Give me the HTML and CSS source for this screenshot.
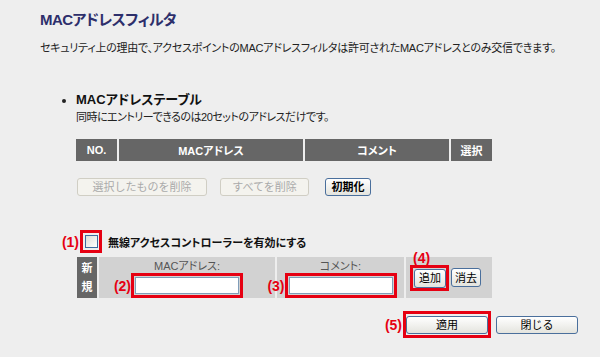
FILE: index.html
```html
<!DOCTYPE html>
<html lang="ja">
<head>
<meta charset="UTF-8">
<title>MACアドレスフィルタ</title>
<link rel="stylesheet" href="styles.css">
</head>
<body>
<div class="page">
	<h1 class="title">MACアドレスフィルタ</h1>
	<p class="lead">セキュリティ上の理由で、アクセスポイントのMACアドレスフィルタは許可されたMACアドレスとのみ交信できます。</p>

	<ul class="section">
		<li>
			<div class="sect-title">MACアドレステーブル</div>
			<div class="sect-note">同時にエントリーできるのは20セットのアドレスだけです。</div>
		</li>
	</ul>

	<table class="mac-table">
		<tr>
			<th class="col-no">NO.</th>
			<th class="col-mac">MACアドレス</th>
			<th class="col-comment">コメント</th>
			<th class="col-sel">選択</th>
		</tr>
	</table>

	<div class="table-actions">
		<button class="btn btn-delsel" disabled>選択したものを削除</button>
		<button class="btn btn-delall" disabled>すべてを削除</button>
		<button class="btn btn-init">初期化</button>
	</div>

	<div class="enable-row">
		<span class="mark mark-check"><span class="num">(1)</span><input type="checkbox" class="chk"></span>
		<label class="enable-label">無線アクセスコントローラーを有効にする</label>
	</div>

	<table class="entry-table">
		<tr>
			<td class="cell-new">新<br>規</td>
			<td class="cell-field cell-mac">
				<div class="field-inner">
					<div class="field-label">MACアドレス:</div>
					<span class="mark mark-input"><span class="num">(2)</span><input type="text" class="txt"></span>
				</div>
			</td>
			<td class="cell-field cell-comment">
				<div class="field-inner">
					<div class="field-label">コメント:</div>
					<span class="mark mark-input"><span class="num">(3)</span><input type="text" class="txt"></span>
				</div>
			</td>
			<td class="cell-btns">
				<div class="btns-inner">
					<span class="mark mark-add"><span class="num num-top">(4)</span><button class="btn btn-add">追加</button></span>
					<button class="btn btn-clear">消去</button>
				</div>
			</td>
		</tr>
	</table>

	<div class="footer">
		<span class="mark mark-apply"><span class="num">(5)</span><button class="btn btn-foot">適用</button></span>
		<button class="btn btn-foot">閉じる</button>
	</div>
</div>
</body>
</html>
```

FILE: styles.css
```css
*{
	margin: 0;
	padding: 0;
	box-sizing: border-box;
}
html,body{
	width: 100%;
	height: 100%;
}
body{
	background-color: #eeeeee;
	color: #222222;
	font-family: "Liberation Sans", "Noto Sans CJK JP", sans-serif;
	font-size: 12px;
	font-feature-settings: "palt";
}

.page{
	padding: 10px 22px 0 40px;
}

.title{
	font-size: 15px;
	line-height: 20px;
	color: #2d2f6b;
	font-weight: bold;
	letter-spacing: -0.6px;
}

.lead{
	margin-top: 10px;
	line-height: 16px;
	font-size: 11px;
	letter-spacing: -0.25px;
	white-space: nowrap;
}

.section{
	margin-top: 35px;
	padding-left: 36px;
}
.sect-title{
	font-size: 13px;
	line-height: 18px;
	font-weight: bold;
	color: #111111;
}
.sect-note{
	font-size: 11px;
	line-height: 16px;
	letter-spacing: -0.5px;
}

/* table header */
.mac-table{
	margin: 12px 0 0 34px;
	border-collapse: separate;
	border-spacing: 2px;
}
.mac-table th{
	height: 22px;
	background-color: #666666;
	color: #ffffff;
	font-size: 11px;
	font-weight: bold;
	text-align: center;
}
.col-no{ width: 41px; }
.col-mac{ width: 184px; }
.col-comment{ width: 144px; }
.col-sel{ width: 41px; }

/* buttons */
.btn{
	display: block;
	height: 18px;
	padding: 0;
	border: 1px solid #4a6f9c;
	border-radius: 3px;
	background: linear-gradient(#ffffff, #e4e4de);
	color: #000000;
	font-family: "Liberation Sans", "Noto Sans CJK JP", sans-serif;
	font-size: 11px;
	line-height: 16px;
	cursor: pointer;
}
.btn:disabled{
	border-color: #d0cec4;
	background: #f4f3ee;
	color: #aaaaaa;
	cursor: default;
}

.table-actions{
	display: flex;
	gap: 13px;
	margin: 15px 0 0 37px;
}
.btn-delsel{ width: 130px; }
.btn-delall{ width: 89px; }
.btn-init{
	width: 46px;
	margin-left: 3px;
	font-weight: bold;
}

/* red annotation boxes */
.mark{
	position: relative;
	display: inline-block;
	border: 3px solid #e60012;
}
.mark .num{
	position: absolute;
	right: 100%;
	top: 50%;
	margin-right: 3px;
	transform: translateY(-50%);
	color: #e60012;
	font-size: 14px;
	font-weight: bold;
	line-height: 16px;
	white-space: nowrap;
}
.mark .num-top{
	right: auto;
	top: auto;
	left: 0;
	bottom: 100%;
	margin: 0 0 2px 0;
	transform: none;
}

.enable-row{
	display: flex;
	align-items: center;
	margin: 34px 0 0 40px;
}
.mark-check{
	padding: 2px 1px 2px 2px;
}
.mark-check .num{
	margin-right: 4px;
}
.chk{
	display: block;
	width: 13px;
	height: 13px;
	appearance: none;
	border: 1px solid #3d6a9e;
	background: linear-gradient(135deg, #dcdcd6, #ffffff);
}
.enable-label{
	margin-left: 6px;
	font-size: 11px;
	font-weight: bold;
	color: #111111;
}

/* new entry table */
.entry-table{
	margin: 2px 0 0 35px;
	border-collapse: separate;
	border-spacing: 2px;
}
.cell-new{
	width: 20px;
	height: 41px;
	background-color: #666666;
	color: #ffffff;
	font-size: 11px;
	font-weight: bold;
	line-height: 19px;
	text-align: center;
}
.cell-field{
	background-color: #d2d2d2;
	vertical-align: top;
	padding-top: 2px;
}
.cell-mac{ width: 176px; }
.cell-comment{ width: 127px; }
.field-inner{
	display: flex;
	flex-direction: column;
	align-items: center;
}
.field-label{
	color: #555555;
	font-size: 11px;
	line-height: 14px;
}
.mark-input{
	padding: 1px;
}
.txt{
	display: block;
	width: 104px;
	height: 17px;
	border: 1px solid #7f9db9;
	background-color: #ffffff;
}

.cell-btns{
	width: 86px;
	background-color: #d2d2d2;
	padding-left: 4px;
	vertical-align: middle;
}
.btns-inner{
	display: flex;
	align-items: center;
	gap: 2px;
}
.mark-add{
	padding: 1px 0 0 1px;
}
.btn-add{
	width: 32px;
	height: 19px;
}
.btn-clear{
	width: 30px;
	height: 19px;
}

.footer{
	display: flex;
	justify-content: flex-end;
	align-items: center;
	gap: 5px;
	margin-top: 11px;
}
.mark-apply{
	padding: 2px 0 1px;
}
.mark-apply .num{
	margin-right: 4px;
}
.btn-foot{
	width: 82px;
}
```
